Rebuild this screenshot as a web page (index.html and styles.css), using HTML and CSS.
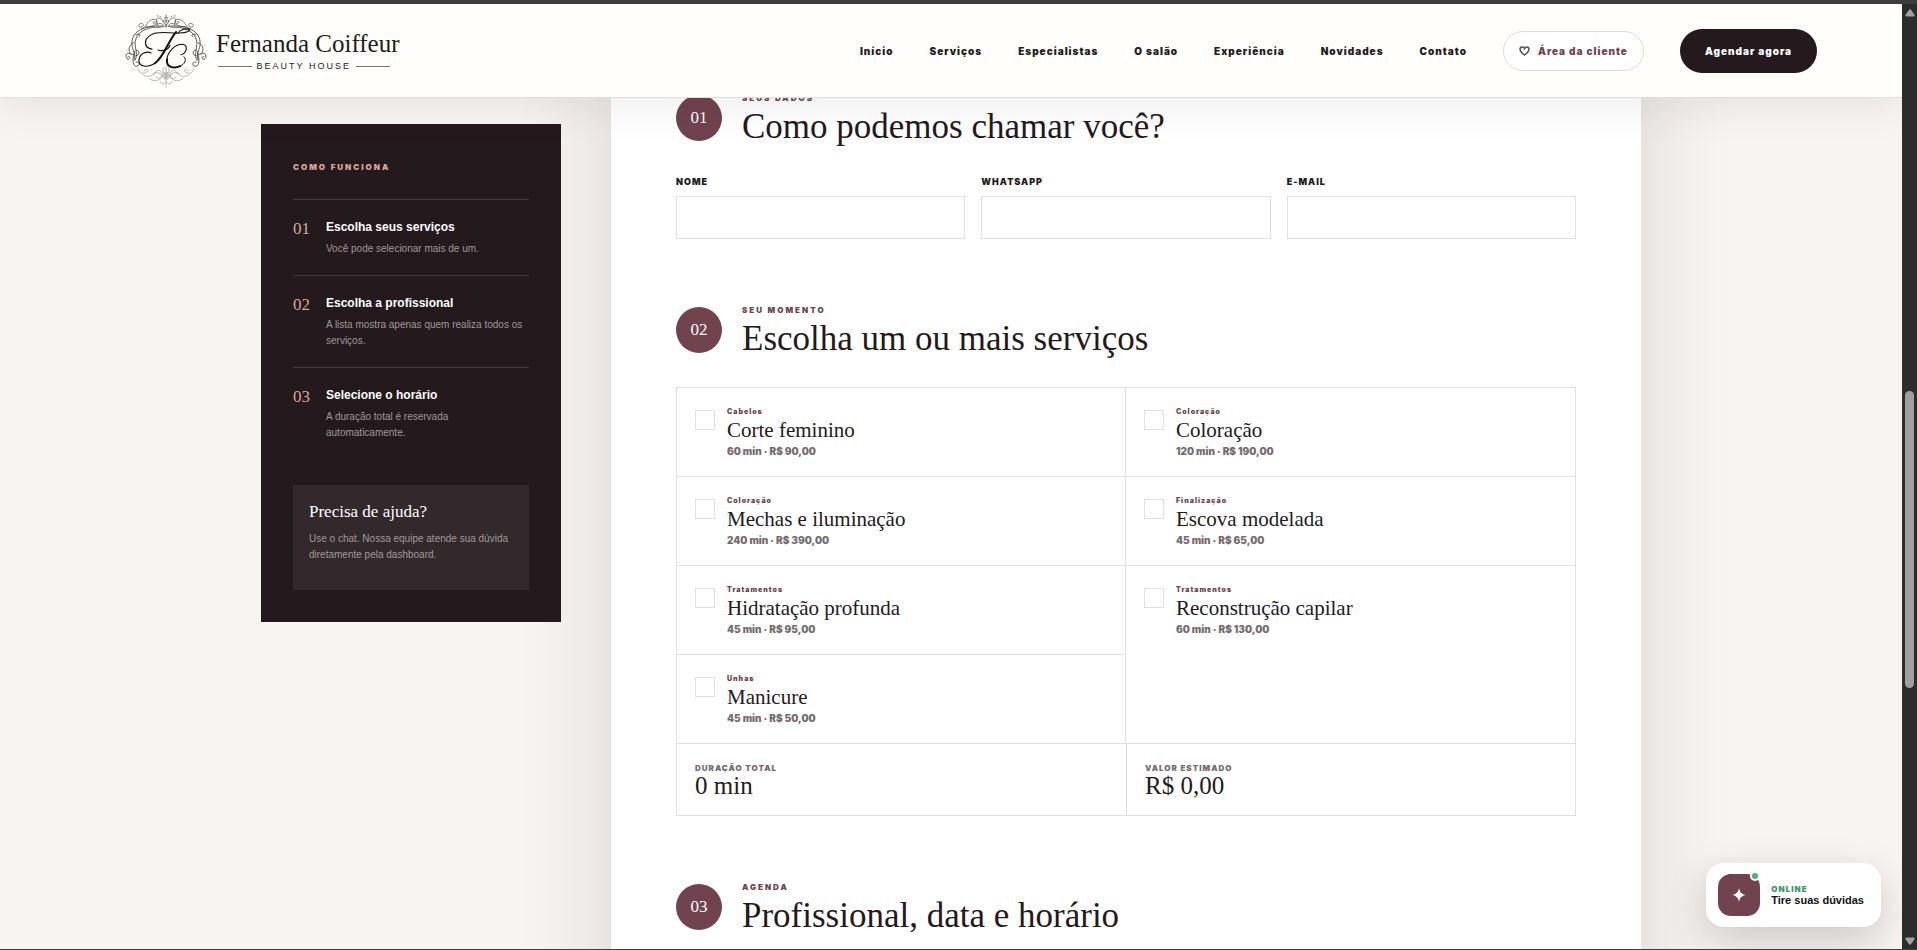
FILE: index.html
```html
<!DOCTYPE html>
<html lang="pt-BR">
<head>
<meta charset="utf-8">
<meta name="viewport" content="width=device-width, initial-scale=1">
<title>Fernanda Coiffeur — Agendamento</title>
<link rel="stylesheet" href="styles.css">
</head>
<body>
<div class="window">
  <div class="page">
    <header class="header">
      <a class="logo" href="#inicio" aria-label="Fernanda Coiffeur Beauty House">
        <svg class="logo-mark" viewBox="0 0 84 78" preserveAspectRatio="none" fill="none" stroke="#333" stroke-linecap="round" aria-hidden="true">
          <g stroke-width=".8">
            <g id="half">
              <path d="M40 13C31 12 26 13 20 15C11 18 7 25 8 33C9 39 12 43 10 48"/>
              <path d="M36 14C26 13 15 17 12 26C9 34 15 41 11 49"/>
              <path stroke-width=".6" d="M19 15C13 15 14 9 18 10C21 11 19 14 17 13M19 15C24 12 22 8 28 6C33 4 35 9 31 10C28 10 29 7 31 8M22 13C28 15 31 10 36 10C40 10 40 14 37 14"/>
              <path stroke-width=".6" d="M34 12C30 5 34 2 38 6C40 9 41 11 42 13M36 3h1M33 2h1"/>
              <path d="M10 30C4 33 4 39 7 42C9 44 12 41 10 39M7 42C1 39 1 46 4 48C7 47 6 44 4 45M10 42C8 49 9 56 13 55C17 54 15 49 12 51"/>
              <path d="M12 38C16 38 16 44 12 44M12 22C15 20 18 22 15 24"/>
            </g>
            <use href="#half" transform="matrix(-1 0 0 1 84 0)"/>
            <path stroke-width=".6" d="M42 1v13M40 4h4M40 9C38 6 41 5 42 8C43 5 46 6 44 9"/>
          </g>
          <g stroke-width=".6" stroke="#888">
            <g id="lower">
              <path d="M14 57C15 64 21 63 23 61C25 58 21 57 20 60M19 64C24 68 29 65 32 61C34 58 38 60 38 64C38 68 33 69 32 66"/>
              <path d="M25 68C31 73 37 70 41 62M29 63C33 60 37 62 41 69M40 56C37 60 40 65 42 68"/>
              <path d="M36 71C37 74 40 75 41 72"/>
            </g>
            <use href="#lower" transform="matrix(-1 0 0 1 84 0)"/>
            <path d="M42 55V77M40 61L44 67M44 61L40 67"/>
          </g>
          <g stroke="#111">
            <path stroke-width="1.2" d="M28 37C20 36 19 27 27 22C35 17 46 21 56 20C62 20 67 18 65 16C62 15 57 16 54 20"/>
            <path stroke-width="2" d="M52 19C45 27 40 45 31 52"/>
            <path stroke-width="1.2" d="M31 52C24 57 14 56 15 48C16 41 23 39 27 41M34 38C39 40 45 37 46 33"/>
            <path stroke-width="1.1" d="M57 43C62 42 65 34 59 32C51 31 43 41 43 48"/>
            <path stroke-width="2" d="M43 48C42 56 50 58 56 55"/>
            <path stroke-width="1" d="M56 55C61 53 63 48 60 45"/>
          </g>
        </svg>
        <span class="logo-text">
          <span class="logo-name">Fernanda Coiffeur</span>
          <span class="logo-sub">BEAUTY HOUSE</span>
        </span>
      </a>
      <nav class="nav">
        <a href="#inicio">Início</a>
        <a href="#servicos">Serviços</a>
        <a href="#especialistas">Especialistas</a>
        <a href="#salao">O salão</a>
        <a href="#experiencia">Experiência</a>
        <a href="#novidades">Novidades</a>
        <a href="#contato">Contato</a>
        <a class="client" href="#cliente">
          <svg width="11" height="10" viewBox="0 0 11 10" fill="none" stroke="currentColor" stroke-width="1.5" aria-hidden="true"><path d="M5.500 9C2 6.500 1 5 1 3.300C1 .4 4.500 .2 5.500 2.600C6.500 .2 10 .4 10 3.300C10 5 9 6.500 5.500 9Z"/></svg>
          Área da cliente
        </a>
        <a class="book" href="#agendar">Agendar agora</a>
      </nav>
    </header>

    <main class="layout">
      <aside class="aside">
        <p class="aside-label">COMO FUNCIONA</p>
        <ol class="steps">
          <li><span class="step-no">01</span><div><strong>Escolha seus serviços</strong><p>Você pode selecionar mais de um.</p></div></li>
          <li><span class="step-no">02</span><div><strong>Escolha a profissional</strong><p>A lista mostra apenas quem realiza todos os serviços.</p></div></li>
          <li><span class="step-no">03</span><div><strong>Selecione o horário</strong><p>A duração total é reservada automaticamente.</p></div></li>
        </ol>
        <div class="help">
          <h3>Precisa de ajuda?</h3>
          <p>Use o chat. Nossa equipe atende sua dúvida diretamente pela dashboard.</p>
        </div>
      </aside>

      <form class="form">
        <section>
          <div class="head"><span class="badge">01</span><div><p class="eyebrow">SEUS DADOS</p><h2>Como podemos chamar você?</h2></div></div>
          <div class="fields">
            <div class="field"><label for="nome">NOME</label><input id="nome" type="text"></div>
            <div class="field"><label for="whats">WHATSAPP</label><input id="whats" type="tel"></div>
            <div class="field"><label for="email">E-MAIL</label><input id="email" type="email"></div>
          </div>
        </section>

        <section>
          <div class="head"><span class="badge">02</span><div><p class="eyebrow">SEU MOMENTO</p><h2>Escolha um ou mais serviços</h2></div></div>
          <div class="services">
            <label class="service"><input type="checkbox"><span class="info"><small>Cabelos</small><b>Corte feminino</b><em>60 min · R$ 90,00</em></span></label>
            <label class="service"><input type="checkbox"><span class="info"><small>Coloração</small><b>Coloração</b><em>120 min · R$ 190,00</em></span></label>
            <label class="service"><input type="checkbox"><span class="info"><small>Coloração</small><b>Mechas e iluminação</b><em>240 min · R$ 390,00</em></span></label>
            <label class="service"><input type="checkbox"><span class="info"><small>Finalização</small><b>Escova modelada</b><em>45 min · R$ 65,00</em></span></label>
            <label class="service"><input type="checkbox"><span class="info"><small>Tratamentos</small><b>Hidratação profunda</b><em>45 min · R$ 95,00</em></span></label>
            <label class="service"><input type="checkbox"><span class="info"><small>Tratamentos</small><b>Reconstrução capilar</b><em>60 min · R$ 130,00</em></span></label>
            <label class="service"><input type="checkbox"><span class="info"><small>Unhas</small><b>Manicure</b><em>45 min · R$ 50,00</em></span></label>
          </div>
          <div class="summary">
            <div><small>DURAÇÃO TOTAL</small><strong>0 min</strong></div>
            <div><small>VALOR ESTIMADO</small><strong>R$ 0,00</strong></div>
          </div>
        </section>

        <section>
          <div class="head"><span class="badge">03</span><div><p class="eyebrow">AGENDA</p><h2>Profissional, data e horário</h2></div></div>
        </section>
      </form>
    </main>

    <button class="chat" type="button">
      <span class="chat-icon">
        <svg width="14" height="14" viewBox="0 0 14 14" fill="#fff" aria-hidden="true"><path d="M7 0C7.800 4.400 9.600 6.200 14 7C9.600 7.800 7.800 9.600 7 14C6.200 9.600 4.400 7.800 0 7C4.400 6.200 6.200 4.400 7 0Z"/></svg>
        <span class="dot"></span>
      </span>
      <span class="chat-text"><small>ONLINE</small><strong>Tire suas dúvidas</strong></span>
    </button>
  </div>
  <div class="scrollbar" aria-hidden="true">
    <svg width="10" height="8" viewBox="0 0 10 8" fill="#a0a0a0"><path d="M3.800 1Q5-.6 6.200 1L9.600 6Q10 7.500 8.500 7.500H1.500Q0 7.500 .4 6Z"/></svg>
    <span class="track-above"></span>
    <span class="thumb"></span>
    <span class="track-below"></span>
    <svg width="10" height="8" viewBox="0 0 10 8" fill="#a0a0a0"><path d="M3.800 7Q5 8.600 6.200 7L9.600 2Q10 .5 8.500 .5H1.500Q0 .5 .4 2Z"/></svg>
  </div>
</div>
</body>
</html>
```

FILE: styles.css
```css
* { box-sizing: border-box; }

:root {
  --ink: #24191d;
  --plum: #70434f;
  --line: #e0e0e0;
  --serif: Georgia, "Liberation Serif", serif;
  --sans: Arial, "Liberation Sans", sans-serif;
  --black: "Arial Black", Inter, sans-serif;
}

body {
  margin: 0;
  font-family: var(--sans);
  color: var(--ink);
  background: #f8f4f1;
}

p, h2, h3, ol { margin: 0; padding: 0; }
a { color: inherit; text-decoration: none; }
small, strong, b, em { display: block; font-style: normal; }

.window {
  display: flex;
  height: 100vh;
  border-top: 4px solid #3c3c3e;
  border-bottom: 1px solid #3c3f4a;
}

.page {
  position: relative;
  flex: 1;
  min-width: 0;
  overflow: hidden;
}

/* Header */
.header {
  position: absolute;
  inset: 0 0 auto 0;
  z-index: 5;
  display: flex;
  align-items: center;
  justify-content: space-between;
  height: 94px;
  padding: 0 85px 0 124px;
  background: #fffefa;
  border-bottom: 1px solid #e0dfda;
  box-shadow: 0 10px 40px rgba(36, 25, 29, .08);
}

.logo { display: flex; align-items: center; gap: 8px; }
.logo-mark { width: 84px; height: 74px; }
.logo-text { display: flex; flex-direction: column; gap: 3px; color: #1c1a1b; }
.logo-name { font: 25px/28px var(--serif); }
.logo-sub {
  display: flex;
  align-items: center;
  gap: 5px;
  padding: 0 10px 0 2px;
  font: 9px/10px var(--sans);
  letter-spacing: 2px;
}
.logo-sub::before, .logo-sub::after { content: ""; flex: 1; height: 1px; background: #777; }

.nav {
  display: flex;
  align-items: center;
  gap: 36px;
  font: 900 10px/14px var(--black);
  letter-spacing: 1px;
  white-space: nowrap;
}

.client {
  display: flex;
  align-items: center;
  gap: 8px;
  padding: 12px 15px;
  border: 1px solid #e2d9da;
  border-radius: 20px;
  background: #fff;
  color: var(--plum);
}
.book {
  padding: 15px 25px;
  border-radius: 22px;
  background: var(--ink);
  color: #fff;
}

/* Layout */
.layout {
  display: grid;
  grid-template-columns: 300px 1fr;
  align-items: start;
  gap: 50px;
  max-width: 1380px;
  margin: 0 auto;
}

.aside {
  position: relative;
  z-index: 1;
  margin-top: 120px;
  padding: 32px;
  background: var(--ink);
  color: #fff;
}
.aside-label {
  margin-bottom: 20px;
  font: 900 8px/23px var(--black);
  letter-spacing: 2px;
  color: #d9a798;
}
.steps { list-style: none; }
.steps li {
  display: flex;
  gap: 16px;
  padding: 20px 0 18px;
  border-top: 1px solid #42383b;
}
.step-no { font: 17px/18px var(--serif); color: #d9a798; }
.steps strong { margin-bottom: 7px; font-size: 12px; line-height: 14px; }
.aside p:not(.aside-label) { font-size: 10px; line-height: 16px; color: #9f999b; }
.help { margin-top: 26px; padding: 17px 16px 27px; background: #33292d; }
.help h3 { margin-bottom: 10px; font: 17px/19px var(--serif); }

/* Form card */
.form {
  display: grid;
  gap: 58px;
  padding: 81px 65px 60px;
  background: #fff;
  box-shadow: 0 30px 90px rgba(36, 25, 29, .14);
}
.head {
  display: flex;
  align-items: center;
  gap: 20px;
  min-height: 66px;
  margin-bottom: 24px;
}
.badge {
  display: grid;
  place-items: center;
  width: 46px;
  height: 46px;
  border-radius: 50%;
  background: var(--plum);
  color: #fff;
  font: 17px/18px var(--serif);
}
.eyebrow {
  margin-bottom: 3px;
  font: 900 8px/14px var(--black);
  letter-spacing: 2px;
  color: var(--plum);
}
h2 { font: 35px/38px var(--serif); }

.fields { display: grid; grid-template-columns: repeat(3, 1fr); gap: 16px; }
.field { display: grid; gap: 7px; }
.field label { font: 900 9px/14px var(--black); letter-spacing: 1px; }
.field input {
  width: 100%;
  height: 43px;
  padding: 0 14px;
  border: 1px solid var(--line);
  background: #fff;
  font: 14px var(--sans);
}

.services {
  display: grid;
  grid-template-columns: 1fr 1fr;
  border: 1px solid var(--line);
}
.service {
  display: flex;
  gap: 12px;
  min-height: 89px;
  padding: 19px 18px 16px;
  border-bottom: 1px solid var(--line);
}
.service:nth-child(odd) { border-right: 1px solid var(--line); }
.service:nth-child(6), .service:last-child { border-bottom: 0; }
.service:last-child { min-height: 88px; }
.service input {
  appearance: none;
  flex: none;
  width: 20px;
  height: 20px;
  margin: 3px 0 0;
  border: 1px solid var(--line);
  background: #fff;
}
.info small { font: 900 7px/9px var(--black); letter-spacing: 1px; color: var(--plum); }
.info b { margin: 3px 0 5px; font: 21px/22px var(--serif); }
.info em { font: 900 10px/11px var(--black); color: #776b6f; }

.summary {
  display: grid;
  grid-template-columns: 1fr 1fr;
  border: 1px solid var(--line);
  border-top: 0;
}
.summary div { min-height: 71px; padding: 18px 18px 17px; }
.summary div + div { border-left: 1px solid var(--line); }
.summary small { font: 900 8px/12px var(--black); letter-spacing: 1px; color: #776b6f; }
.summary strong { font: 25px/24px var(--serif); }

/* Chat */
.chat {
  position: absolute;
  right: 21px;
  bottom: 22px;
  z-index: 6;
  display: flex;
  align-items: center;
  gap: 11px;
  min-height: 64px;
  padding: 11px 17px 11px 12px;
  border: 0;
  border-radius: 18px;
  background: #fff;
  box-shadow: 0 14px 42px rgba(36, 25, 29, .2);
  color: #111;
  font-family: var(--sans);
  text-align: left;
}
.chat-icon {
  position: relative;
  display: grid;
  place-items: center;
  width: 42px;
  height: 42px;
  border-radius: 13px;
  background: var(--plum);
}
.dot {
  position: absolute;
  top: -3px;
  right: 0;
  width: 10px;
  height: 10px;
  border: 2px solid #fff;
  border-radius: 50%;
  background: #4fae78;
}
.chat small { font: 900 8px/10px var(--black); letter-spacing: 1px; color: #3f9465; }
.chat strong { font-size: 11px; line-height: 12px; }

/* Scroll track */
.scrollbar {
  display: flex;
  flex-direction: column;
  align-items: center;
  width: 15px;
  padding: 5px 0 4px;
  background: #2c2c2c;
}
.track-above { flex: 3; }
.track-below { flex: 2; }
.thumb {
  width: 9px;
  height: 297px;
  border-radius: 5px;
  background: #9f9f9f;
}
```
